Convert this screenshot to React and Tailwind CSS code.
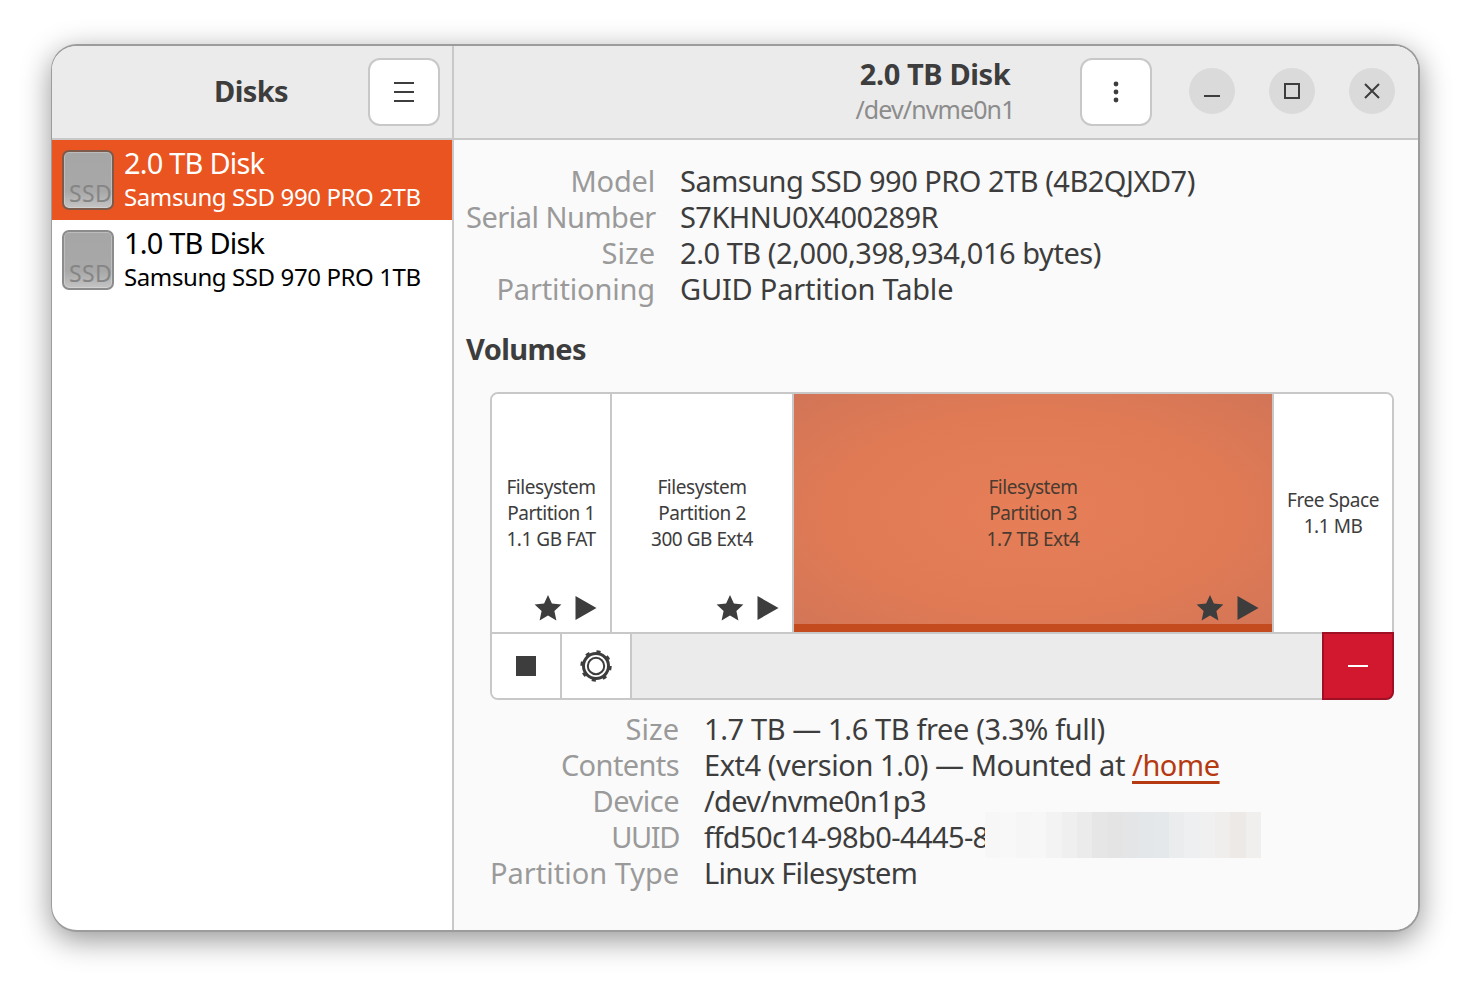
import React from "react";

const font = { fontFamily: '"Noto Sans", "Open Sans", sans-serif' };

function SsdIcon({ selected }) {
  return (
    <div className={"relative w-[52px] h-[60px] shrink-0 rounded-[7px] border-2 overflow-hidden bg-[linear-gradient(#a6a6a6_0%,#a8a8a8_70%,#c4c4c4_100%)] shadow-[inset_0_0_0_1px_rgba(255,255,255,0.25)] " + (selected ? "border-[#7d5a4a]" : "border-[#8c8c8c]")}>
      <span className="absolute left-[5px] bottom-[1px] text-[23px] leading-[28px] tracking-[0.4px] text-[#858585] whitespace-nowrap">SSD</span>
    </div>
  );
}

function DiskRow({ title, sub, selected }) {
  return (
    <div className={"h-[80px] flex items-center pl-[10px] gap-[10px] " + (selected ? "bg-[#e95420] text-white" : "text-black")}>
      <SsdIcon selected={selected} />
      <div className="flex flex-col -mt-[3px]">
        <span className="text-[29px] leading-[36px] tracking-[-0.8px]">{title}</span>
        <span className="text-[24px] leading-[32px] tracking-[-0.4px]">{sub}</span>
      </div>
    </div>
  );
}

function WinBtn({ children }) {
  return (
    <button className="w-[46px] h-[46px] rounded-full bg-[#dadada] flex items-center justify-center">
      {children}
    </button>
  );
}

function HeaderBtn({ children }) {
  return (
    <button className="w-[72px] h-[68px] rounded-[12px] bg-white border-2 border-[#c8c8c8] flex items-center justify-center">
      {children}
    </button>
  );
}

function Star() {
  return (
    <svg width="28" height="28" viewBox="0 0 28 28" className="blur-[0.4px]">
      <path d="M14 1L17.9 9.6L27.4 10.6L20.4 17L22.4 26.4L14 21.6L5.6 26.4L7.6 17L0.6 10.6L10.1 9.6z" fill="#3d3d3d" />
    </svg>
  );
}

function Play() {
  return (
    <svg width="22" height="26" viewBox="0 0 22 26" className="blur-[0.4px]"><path d="M0.5 1L21.5 13L0.5 25z" fill="#3d3d3d" /></svg>
  );
}

function Segment({ lines, width, selected, icons, border = true }) {
  return (
    <div className={"relative h-full shrink-0 flex flex-col items-center justify-center text-[19px] leading-[26px] tracking-[-0.45px] " + (border ? "border-r-[2px] border-[#c8c8c8] " : "") + (selected ? "bg-[radial-gradient(ellipse_at_center,#e67f58_0%,#e07a55_60%,#d17557_100%)] text-[#4a3a30]" : "bg-white text-[#3d3d3d]") + " " + width}>
      {lines.map((l) => <span key={l}>{l}</span>)}
      {icons && (
        <div className="absolute right-[13px] bottom-[10px] flex items-center gap-[13px]">
          <Star />
          <Play />
        </div>
      )}
      {selected && <div className="absolute left-0 right-0 bottom-0 h-[8px] bg-[#c44b1d]" />}
    </div>
  );
}

function Details({ rows, labelW }) {
  return (
    <div className="grid gap-x-[25px] text-[29px] leading-[36px]" style={{ gridTemplateColumns: `${labelW}px 1fr` }}>
      {rows.map(([k, v, kc, vc]) => (
        <React.Fragment key={k}>
          <div className={"text-right text-[#9a9a9a] whitespace-nowrap " + kc}>{k}</div>
          <div className={"text-[#3d3d3d] whitespace-nowrap " + vc}>{v}</div>
        </React.Fragment>
      ))}
    </div>
  );
}

const blurColors = ["#f7f7f7","#f8f8f8","#f6f6f6","#f7f7f7","#f3f3f3","#efefef","#ebebeb","#e6e6e6","#e4e4e4","#e3e5e6","#e4e7e9","#e5e8ea","#eaecee","#eeeff0","#f0f0f0","#f0eded","#ede9e7","#f1efed"];

export default function App() {
  return (
    <div className="w-[1470px] h-[988px] bg-white pt-[44px] pl-[51px]" style={font}>
      <div className="w-[1369px] h-[888px] rounded-[26px] border-2 border-l-[1px] border-[#9c9c9c] overflow-hidden bg-white flex shadow-[0_8px_30px_rgba(0,0,0,0.42)]">
        <div className="w-[402px] shrink-0 flex flex-col border-r-2 border-[#c8c8c8]">
          <div className="h-[94px] shrink-0 bg-[#ebebeb] border-b-2 border-[#c8c8c8] relative flex items-center justify-center pb-[3px] pr-[2px]">
            <span className="text-[29px] font-bold text-[#3d3d3d] tracking-[-0.6px]">Disks</span>
            <div className="absolute right-[12px] top-[12px]">
              <HeaderBtn>
                <svg width="20" height="20" viewBox="0 0 20 20"><path d="M0 1h20M0 10h20M0 19h20" stroke="#3d3d3d" strokeWidth="2" /></svg>
              </HeaderBtn>
            </div>
          </div>
          <DiskRow title="2.0 TB Disk" sub="Samsung SSD 990 PRO 2TB" selected />
          <DiskRow title="1.0 TB Disk" sub="Samsung SSD 970 PRO 1TB" />
        </div>
        <div className="flex-1 flex flex-col bg-[#fafafa] min-w-0">
          <div className="h-[94px] shrink-0 bg-[#ebebeb] border-b-2 border-[#c8c8c8] relative flex items-center pl-[12px]">
            <div className="w-[938px] flex flex-col items-center -mt-[2px]">
              <span className="text-[29px] leading-[36px] font-bold text-[#3d3d3d] tracking-[-0.4px]">2.0 TB Disk</span>
              <span className="text-[25px] leading-[34px] text-[#8c8c8c] tracking-[-0.9px]">/dev/nvme0n1</span>
            </div>
            <div className="absolute left-[626px] top-[12px]">
              <HeaderBtn>
                <svg width="6" height="22" viewBox="0 0 6 22"><circle cx="3" cy="3" r="2.4" fill="#3d3d3d" /><circle cx="3" cy="11" r="2.4" fill="#3d3d3d" /><circle cx="3" cy="19" r="2.4" fill="#3d3d3d" /></svg>
              </HeaderBtn>
            </div>
            <div className="absolute right-[23px] top-[22px] flex gap-[34px]">
              <WinBtn><svg width="16" height="16" viewBox="0 0 16 16"><path d="M0 13h16" stroke="#3d3d3d" strokeWidth="2" /></svg></WinBtn>
              <WinBtn><svg width="16" height="16" viewBox="0 0 16 16"><rect x="1" y="1" width="14" height="14" fill="none" stroke="#3d3d3d" strokeWidth="2" /></svg></WinBtn>
              <WinBtn><svg width="16" height="16" viewBox="0 0 16 16"><path d="M1 1l14 14M15 1L1 15" stroke="#3d3d3d" strokeWidth="2" /></svg></WinBtn>
            </div>
          </div>
          <div className="flex-1 pl-[12px] pt-[23px]">
            <Details
              labelW={189}
              rows={[
                ["Model", "Samsung SSD 990 PRO 2TB (4B2QJXD7)", "tracking-[-0.2px]", "tracking-[-0.5px]"],
                ["Serial Number", "S7KHNU0X400289R", "tracking-[-0.5px]", "tracking-[-0.55px]"],
                ["Size", "2.0 TB (2,000,398,934,016 bytes)", "tracking-[0px]", "tracking-[-0.45px]"],
                ["Partitioning", "GUID Partition Table", "tracking-[-0.15px]", "tracking-[-0.2px]"],
              ]}
            />
            <div className="mt-[23px] text-[29px] leading-[38px] font-bold text-[#3d3d3d] tracking-[-0.6px]">Volumes</div>
            <div className="mt-[24px] ml-[24px] w-[904px] h-[308px] rounded-[8px] border-2 border-[#c8c8c8] flex flex-col">
              <div className="h-[240px] shrink-0 flex border-b-2 border-[#c8c8c8] rounded-t-[6px] overflow-hidden">
                <Segment width="w-[120px]" icons lines={["Filesystem", "Partition 1", "1.1 GB FAT"]} />
                <Segment width="w-[182px]" icons lines={["Filesystem", "Partition 2", "300 GB Ext4"]} />
                <Segment width="w-[480px]" icons selected lines={["Filesystem", "Partition 3", "1.7 TB Ext4"]} />
                <Segment width="flex-1" border={false} lines={["Free Space", "1.1 MB"]} />
              </div>
              <div className="flex-1 flex bg-[#ebebeb] rounded-b-[6px]">
                <div className="w-[70px] bg-white border-r-2 border-[#c8c8c8] rounded-bl-[6px] flex items-center justify-center">
                  <div className="w-[20px] h-[20px] bg-[#3d3d3d]" />
                </div>
                <div className="w-[70px] bg-white border-r-2 border-[#c8c8c8] flex items-center justify-center">
                  <svg width="32" height="32" viewBox="0 0 32 32">
                    <circle cx="16" cy="16" r="12.5" fill="none" stroke="#3d3d3d" strokeWidth="3" />
                    <circle cx="16" cy="16" r="14" fill="none" stroke="#3d3d3d" strokeWidth="3.4" strokeDasharray="4 7" />
                    <circle cx="16" cy="16" r="8.2" fill="none" stroke="#3d3d3d" strokeWidth="2" />
                  </svg>
                </div>
                <div className="flex-1" />
                <div className="w-[72px] -my-[2px] -mr-[2px] bg-[#d2182f] border-2 border-[#a01024] rounded-br-[8px] flex items-center justify-center">
                  <div className="w-[20px] h-[2px] bg-white" />
                </div>
              </div>
            </div>
            <div className="mt-[11px] ml-[24px] relative">
              <Details
                labelW={189}
                rows={[
                  ["Size", "1.7 TB — 1.6 TB free (3.3% full)", "tracking-[0px]", "tracking-[-0.38px]"],
                  ["Contents", <>Ext4 (version 1.0) — Mounted at <a className="text-[#b53a12] underline decoration-[3px] underline-offset-[5px]">/home</a></>, "tracking-[-0.6px]", "tracking-[-0.44px]"],
                  ["Device", "/dev/nvme0n1p3", "tracking-[-0.5px]", "tracking-[-0.7px]"],
                  ["UUID", "ffd50c14-98b0-4445-8", "tracking-[-1.4px]", "tracking-[-0.6px]"],
                  ["Partition Type", "Linux Filesystem", "tracking-[0px]", "tracking-[-0.7px]"],
                ]}
              />
              <div className="absolute left-[495px] top-[101px] w-[276px] h-[46px] flex">
                {blurColors.map((c, i) => (
                  <div key={i} className="flex-1" style={{ backgroundColor: c }} />
                ))}
              </div>
            </div>
          </div>
        </div>
      </div>
    </div>
  );
}
